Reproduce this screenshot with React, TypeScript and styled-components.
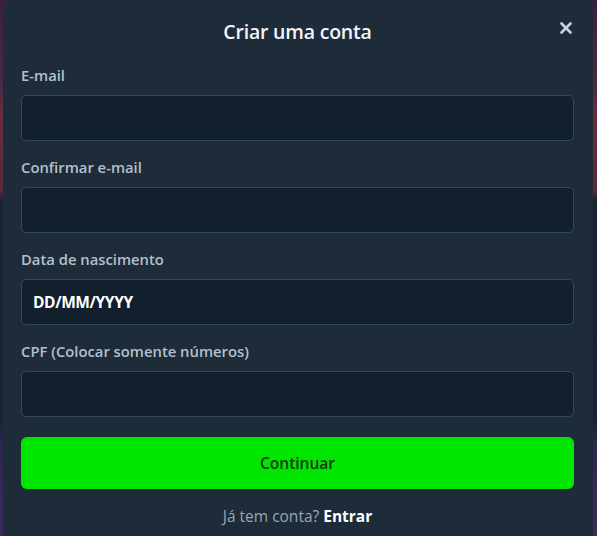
import React from 'react';
import styled, { createGlobalStyle } from 'styled-components';

const GlobalStyle = createGlobalStyle`
  html, body {
    margin: 0;
    padding: 0;
    height: 100%;
    overflow: hidden;
  }
  body {
    background: linear-gradient(
      180deg,
      #3a1f3c 0px,
      #4a2b46 90px,
      #6a2d3e 110px,
      #5a2a3a 190px,
      #1a2335 200px,
      #172233 420px,
      #2c2650 440px,
      #3a2c5c 536px
    );
    font-family: 'Open Sans', 'Liberation Sans', sans-serif;
  }
`;

const Page = styled.div`
  display: flex;
  padding-left: 3px;
  height: 536px;
`;

const Modal = styled.div`
  position: relative;
  box-sizing: border-box;
  width: 590px;
  height: 560px;
  background: #1e2b38;
  border-radius: 8px;
  padding: 20px 19px 0 18px;
  display: flex;
  flex-direction: column;
`;

const Title = styled.h1`
  margin: 0 0 22px;
  height: 24px;
  line-height: 24px;
  text-align: center;
  font-size: 19.5px;
  font-weight: 600;
  letter-spacing: -0.2px;
  color: #f2f5f8;
`;

const CloseButton = styled.button`
  position: absolute;
  top: 19px;
  right: 18px;
  width: 18px;
  height: 18px;
  padding: 0;
  border: none;
  background: none;
  display: flex;
  align-items: center;
  justify-content: center;
  cursor: pointer;
`;

const Form = styled.form`
  display: flex;
  flex-direction: column;
  gap: 17px;
`;

const Field = styled.label`
  display: flex;
  flex-direction: column;
  gap: 11px;
`;

const Label = styled.span`
  height: 18px;
  line-height: 18px;
  font-size: 14.8px;
  font-weight: 650;
  color: #b4c0cd;
`;

const Input = styled.input`
  box-sizing: border-box;
  height: 46px;
  width: 100%;
  padding: 0 11px;
  border: 1.5px solid #33475a;
  border-radius: 5px;
  background: #12202e;
  color: #ffffff;
  font-family: inherit;
  font-size: 15.5px;
  font-weight: 700;
  outline: none;

  &::placeholder {
    color: #ffffff;
    opacity: 1;
    letter-spacing: -0.4px;
  }
`;

const SubmitButton = styled.button`
  margin-top: 20px;
  height: 52px;
  border: none;
  border-radius: 6px;
  background: #00e600;
  color: #0b3a0e;
  font-family: inherit;
  font-size: 15.5px;
  font-weight: 650;
  cursor: pointer;
`;

const Footer = styled.p`
  margin: 17px 0 0;
  line-height: 20px;
  text-align: center;
  font-size: 15.5px;
  color: #98a6b5;
`;

const FooterLink = styled.a`
  color: #ffffff;
  font-weight: 700;
  text-decoration: none;
`;

const fields = [
  { label: 'E-mail', type: 'email', placeholder: '' },
  { label: 'Confirmar e-mail', type: 'email', placeholder: '' },
  { label: 'Data de nascimento', type: 'text', placeholder: 'DD/MM/YYYY' },
  { label: 'CPF (Colocar somente números)', type: 'text', placeholder: '' },
];

const App: React.FC = () => {
  return (
    <>
      <GlobalStyle />
      <Page>
        <Modal>
          <Title>Criar uma conta</Title>
          <CloseButton aria-label="Fechar">
            <svg width="12" height="12" viewBox="0 0 12 12">
              <path d="M1.5 1.5 L10.5 10.5 M10.5 1.5 L1.5 10.5" stroke="#c8d2dc" strokeWidth="2.6" strokeLinecap="round" />
            </svg>
          </CloseButton>
          <Form onSubmit={(e) => e.preventDefault()}>
            {fields.map((f) => (
              <Field key={f.label}>
                <Label>{f.label}</Label>
                <Input type={f.type} placeholder={f.placeholder} />
              </Field>
            ))}
          </Form>
          <SubmitButton type="button">Continuar</SubmitButton>
          <Footer>
            Já tem conta? <FooterLink href="#">Entrar</FooterLink>
          </Footer>
        </Modal>
      </Page>
    </>
  );
};

export default App;
